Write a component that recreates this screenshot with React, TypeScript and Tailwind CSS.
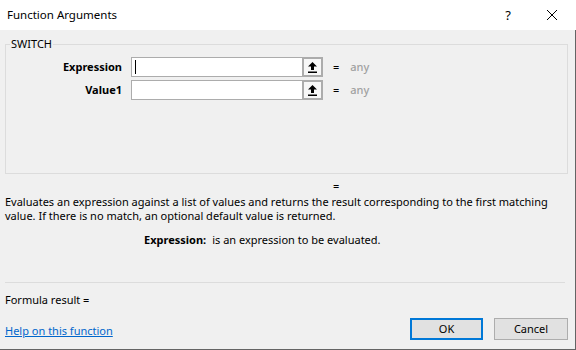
import type { ReactNode } from 'react'

function CollapseIcon() {
  return (
    <svg width="9" height="11" viewBox="0 0 9 11" fill="black">
      <path d="M4.5 0 L9 4.5 L6 4.5 L6 8 L3 8 L3 4.5 L0 4.5 Z" />
      <rect x="0" y="9.5" width="9" height="1.5" />
    </svg>
  )
}

function ArgRow({ label, focused }: { label: string; focused?: boolean }) {
  return (
    <div className="flex h-[20px] items-center">
      <div className="w-[116px] text-right font-bold">{label}</div>
      <div className="ml-[9px] flex h-[20px] w-[192px]">
        <div className="flex flex-1 items-center border-y border-l border-[#acacac] bg-white">
          {focused && <div className="ml-[3px] h-[14px] w-px bg-black" />}
        </div>
        <button className="flex h-[20px] w-[21px] items-center justify-center border-2 border-[#acacac] bg-[#f7f7f7]">
          <CollapseIcon />
        </button>
      </div>
      <span className="ml-[10px]">=</span>
      <span className="ml-[11px] font-medium text-[#a0a0a0]">any</span>
    </div>
  )
}

function DialogButton({ children, primary }: { children: ReactNode; primary?: boolean }) {
  return (
    <button
      className={
        primary
          ? 'h-[22px] w-[73px] border-2 border-[#0078d7] bg-[#e1e1e1]'
          : 'h-[22px] w-[74px] border border-[#adadad] bg-[#e1e1e1]'
      }
    >
      {children}
    </button>
  )
}

export default function App() {
  return (
    <div className="flex h-[350px] w-[576px] flex-col bg-[#f0f0f0] font-['Noto_Sans',sans-serif] text-[11px] leading-[16px] text-black">
      <div className="flex h-[30px] items-center bg-white pl-[7px]">
        <span className="flex-1 text-[11.5px]">Function Arguments</span>
        <span className="text-[13px]">?</span>
        <svg className="ml-[36px] mr-[19px]" width="10" height="10" viewBox="0 0 10 10" stroke="black" strokeWidth="1">
          <path d="M0 0 L10 10 M10 0 L0 10" />
        </svg>
      </div>

      <div className="flex flex-1 flex-col border-b border-r border-[#646464] pl-[5px] pr-[7px]">
        <fieldset className="mt-[6px] h-[138px] border border-[#dcdcdc]">
          <legend className="ml-[4px] px-px">SWITCH</legend>
          <div className="mt-[5px] flex flex-col gap-[3px]">
            <ArgRow label="Expression" focused />
            <ArgRow label="Value1" />
          </div>
        </fieldset>

        <div className="mt-[4px] pl-[328px]">=</div>
        <div className="mt-px flex flex-col whitespace-nowrap leading-[14px]">
          <span>Evaluates an expression against a list of values and returns the result corresponding to the first matching</span>
          <span>value. If there is no match, an optional default value is returned.</span>
        </div>
        <div className="mt-[9px] flex pl-[139px]">
          <span className="font-bold">Expression:</span>
          <span className="ml-[6px]">is an expression to be evaluated.</span>
        </div>

        <div className="mr-[3px] mt-[34px] h-px bg-[#dcdcdc]" />
        <div className="mt-[9px]">Formula result =</div>

        <div className="mt-[10px] flex items-center">
          <a href="#" className="flex-1 pt-[3px] text-[#0066cc] underline">
            Help on this function
          </a>
          <DialogButton primary>OK</DialogButton>
          <div className="w-[11px]" />
          <DialogButton>Cancel</DialogButton>
        </div>
      </div>
    </div>
  )
}
